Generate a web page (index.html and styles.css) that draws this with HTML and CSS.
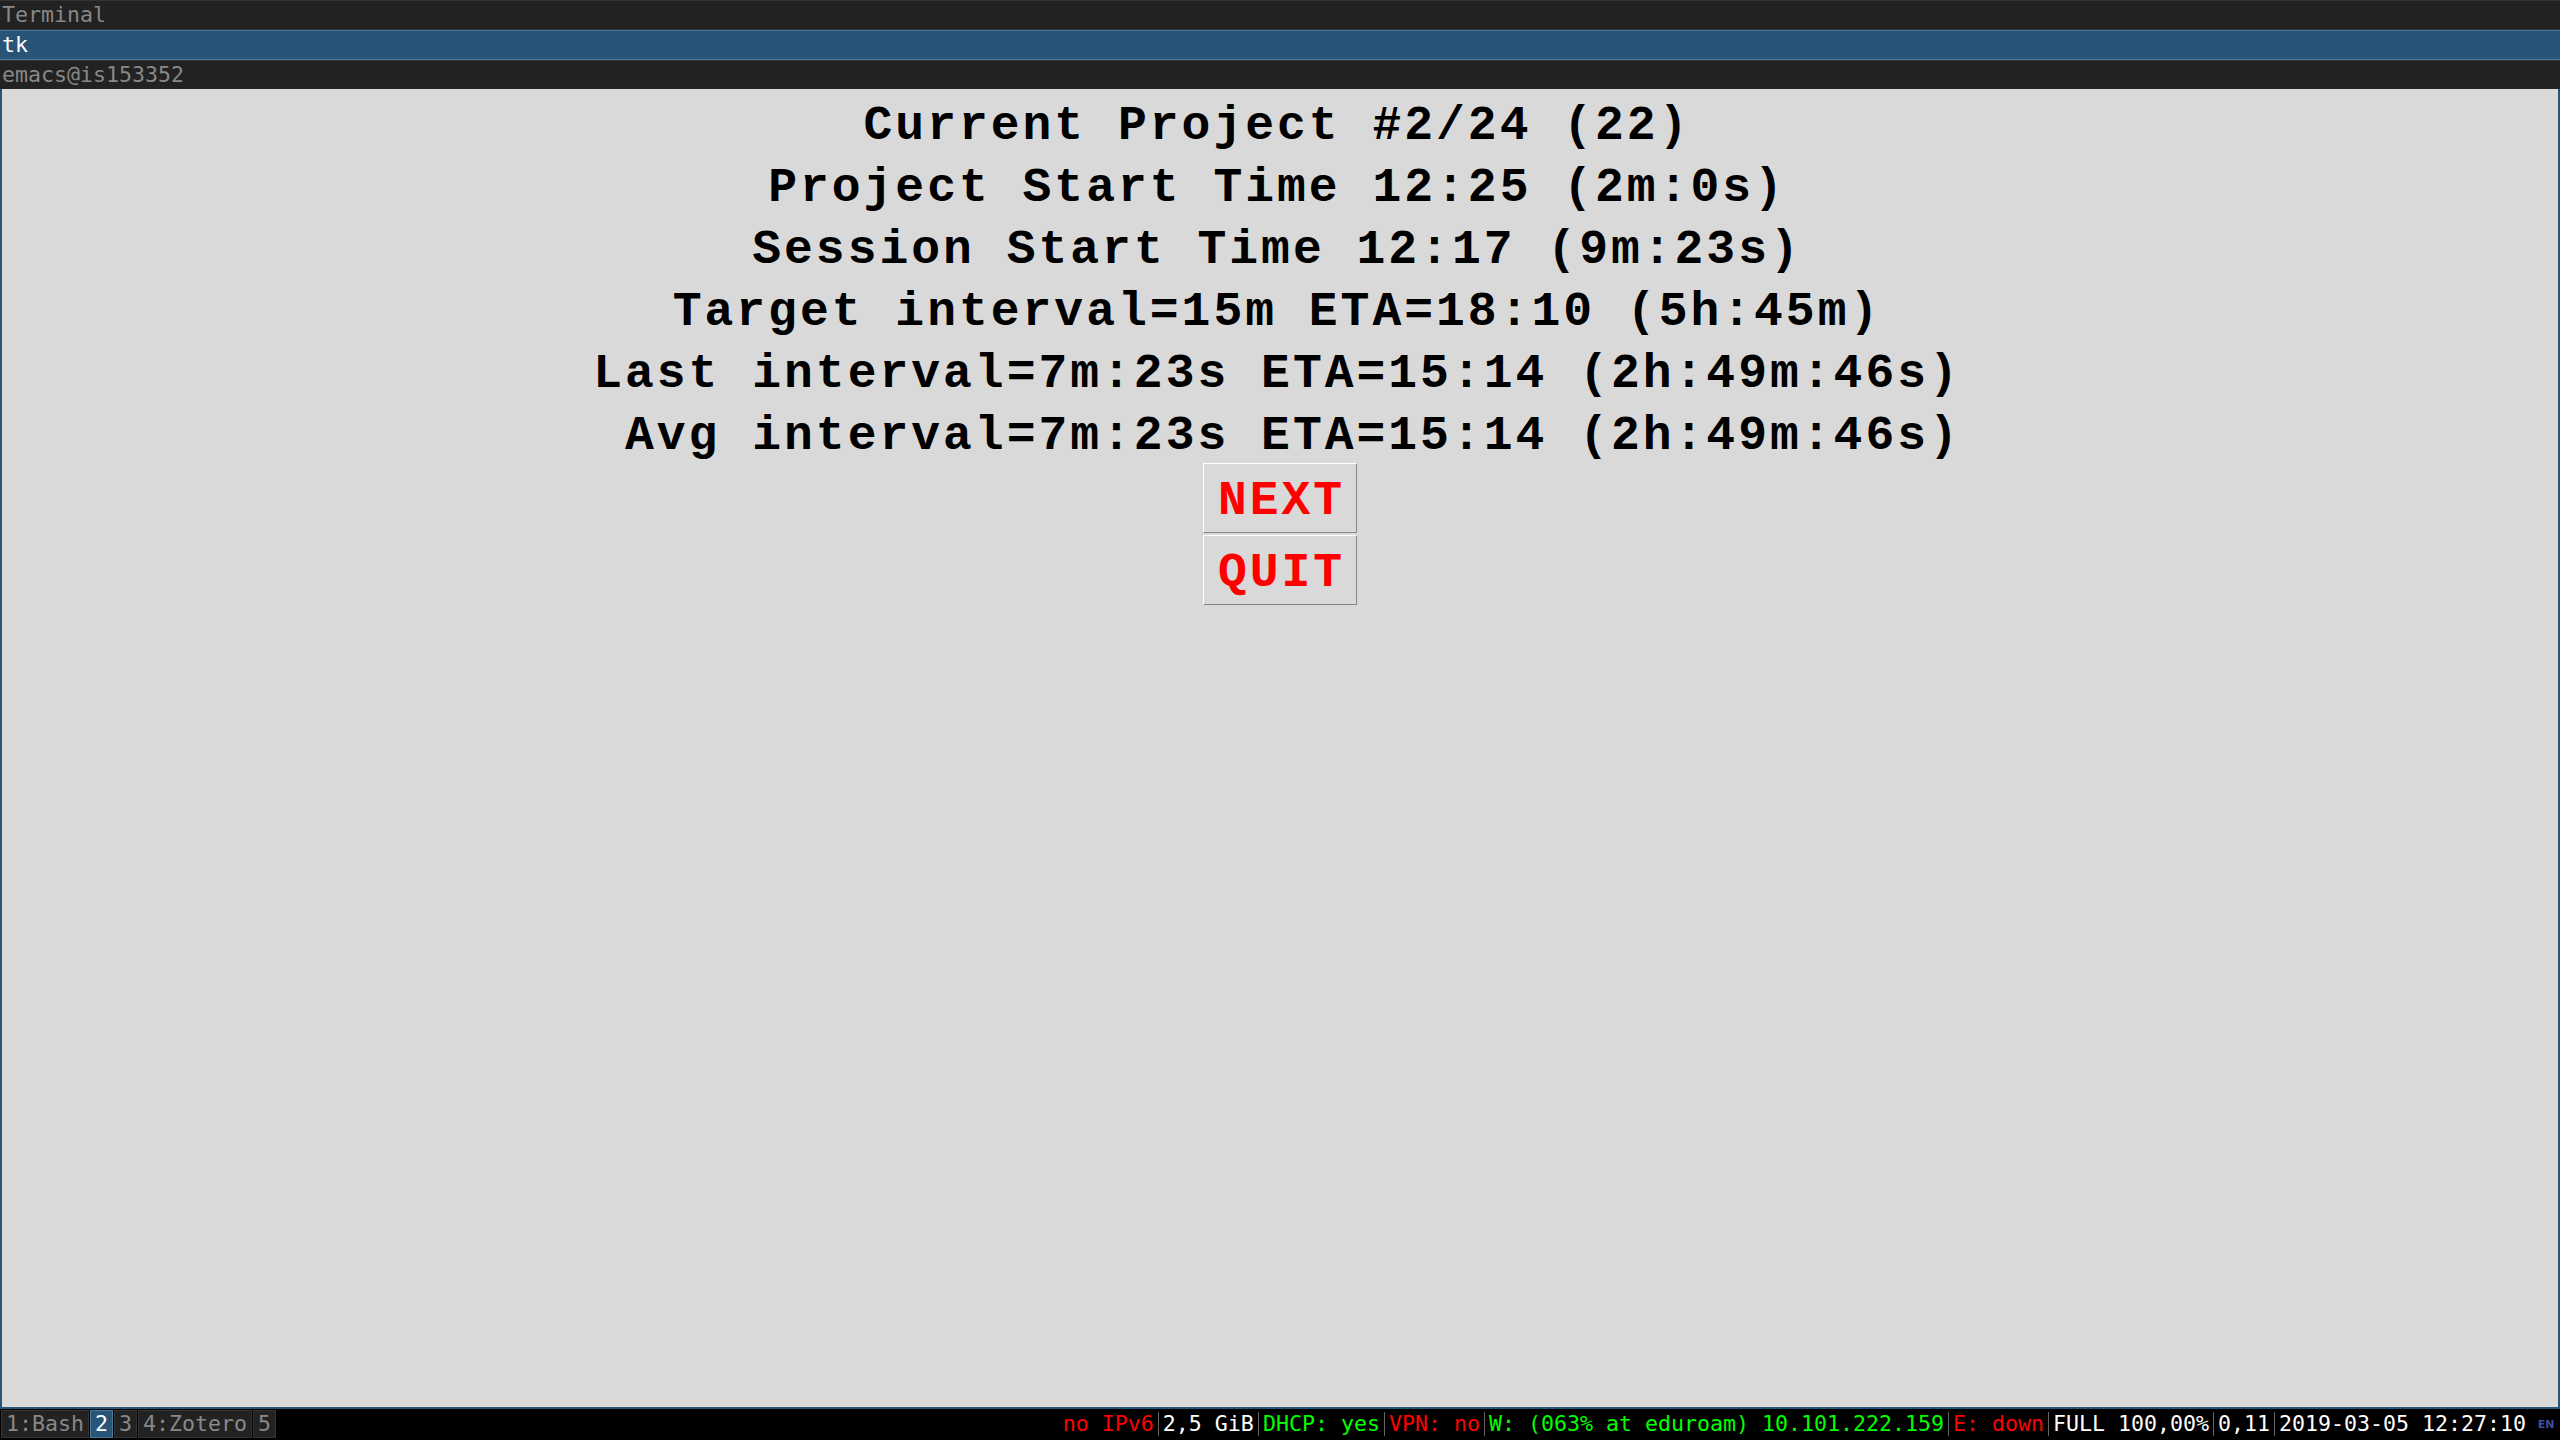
FILE: index.html
```html
<!DOCTYPE html>
<html>
<head>
<meta charset="utf-8">
<title>tk</title>
<link rel="stylesheet" href="styles.css">
</head>
<body>
<div class="screen">
  <div class="tab tab-unfocused">Terminal</div>
  <div class="tab tab-focused">tk</div>
  <div class="tab tab-unfocused tab-last">emacs@is153352</div>
  <main class="window">
    <div class="labels">
      <div class="label">Current Project #2/24 (22)</div>
      <div class="label">Project Start Time 12:25 (2m:0s)</div>
      <div class="label">Session Start Time 12:17 (9m:23s)</div>
      <div class="label">Target interval=15m ETA=18:10 (5h:45m)</div>
      <div class="label">Last interval=7m:23s ETA=15:14 (2h:49m:46s)</div>
      <div class="label"> Avg interval=7m:23s ETA=15:14 (2h:49m:46s)</div>
    </div>
    <div class="buttons">
      <div class="btn">NEXT</div>
      <div class="btn">QUIT</div>
    </div>
  </main>
  <footer class="bar">
    <div class="workspaces">
      <span class="ws">1:Bash</span>
      <span class="ws ws-focused">2</span>
      <span class="ws">3</span>
      <span class="ws">4:Zotero</span>
      <span class="ws">5</span>
    </div>
    <div class="status">
      <span class="blk red">no IPv6</span><span class="sep"></span>
      <span class="blk white">2,5 GiB</span><span class="sep"></span>
      <span class="blk green">DHCP: yes</span><span class="sep"></span>
      <span class="blk red">VPN: no</span><span class="sep"></span>
      <span class="blk green">W: (063% at eduroam) 10.101.222.159</span><span class="sep"></span>
      <span class="blk red">E: down</span><span class="sep"></span>
      <span class="blk white">FULL 100,00%</span><span class="sep"></span>
      <span class="blk white">0,11</span><span class="sep"></span>
      <span class="blk white">2019-03-05 12:27:10</span>
    </div>
    <div class="tray">EN</div>
  </footer>
</div>
</body>
</html>
```

FILE: styles.css
```css
html, body {
  margin: 0;
  padding: 0;
}

body {
  width: 2560px;
  height: 1440px;
  overflow: hidden;
  background: #000000;
  font-family: "DejaVu Sans Mono", monospace;
}

.screen {
  display: flex;
  flex-direction: column;
  height: 1440px;
}

.tab {
  box-sizing: border-box;
  height: 30px;
  line-height: 28px;
  font-size: 21.6px;
  padding-left: 2px;
  border-top: 1px solid;
  border-bottom: 1px solid;
  white-space: pre;
  flex: none;
}

.tab-unfocused {
  background: #222222;
  color: #888888;
  border-color: #333333;
}

.tab-focused {
  background: #285577;
  color: #ffffff;
  border-color: #4c7899;
}

.tab-last {
  height: 29px;
  border-bottom: 0;
}

.window {
  flex: 1;
  min-height: 0;
  background: #d9d9d9;
  border: 2px solid #285577;
  border-top: 0;
}

.labels {
  font-family: "Liberation Mono", monospace;
  font-weight: bold;
  font-size: 48px;
  letter-spacing: 3px;
  color: #000000;
  text-align: center;
  padding-right: 6px;
}

.label {
  box-sizing: border-box;
  white-space: pre;
  height: 62px;
  padding-top: 13px;
  line-height: 48px;
}

.buttons {
  display: flex;
  flex-direction: column;
  align-items: center;
  gap: 2px;
  padding-top: 2px;
}

.btn {
  box-sizing: border-box;
  width: 154px;
  height: 70px;
  border: 1px solid;
  border-color: #ffffff #888888 #888888 #ffffff;
  background: #d9d9d9;
  color: #ff0000;
  font-family: "Liberation Mono", monospace;
  font-weight: bold;
  font-size: 48px;
  letter-spacing: 3px;
  line-height: 48px;
  padding-top: 13px;
  padding-left: 3px;
  text-align: center;
}

.bar {
  flex: none;
  height: 31px;
  background: #000000;
  display: flex;
  align-items: flex-start;
  font-size: 21.6px;
}

.workspaces {
  display: flex;
  gap: 1px;
  padding: 1px 0 0 1px;
}

.ws {
  box-sizing: border-box;
  height: 28px;
  line-height: 26px;
  padding: 0 4px;
  border: 1px solid #333333;
  background: #222222;
  color: #888888;
}

.ws-focused {
  border-color: #4c7899;
  background: #285577;
  color: #ffffff;
}

.status {
  margin-left: auto;
  display: flex;
  align-items: center;
  height: 30px;
  line-height: 30px;
  white-space: pre;
}

.sep {
  width: 1px;
  height: 24px;
  background: #666666;
  margin: 0 4px;
}

.red { color: #ff0000; }
.green { color: #00ff00; }
.white { color: #ffffff; }

.tray {
  width: 28px;
  height: 30px;
  margin-left: 6px;
  display: flex;
  align-items: center;
  justify-content: center;
  font-family: "DejaVu Sans", sans-serif;
  font-weight: bold;
  font-size: 11px;
  color: #3b4da0;
}
```
